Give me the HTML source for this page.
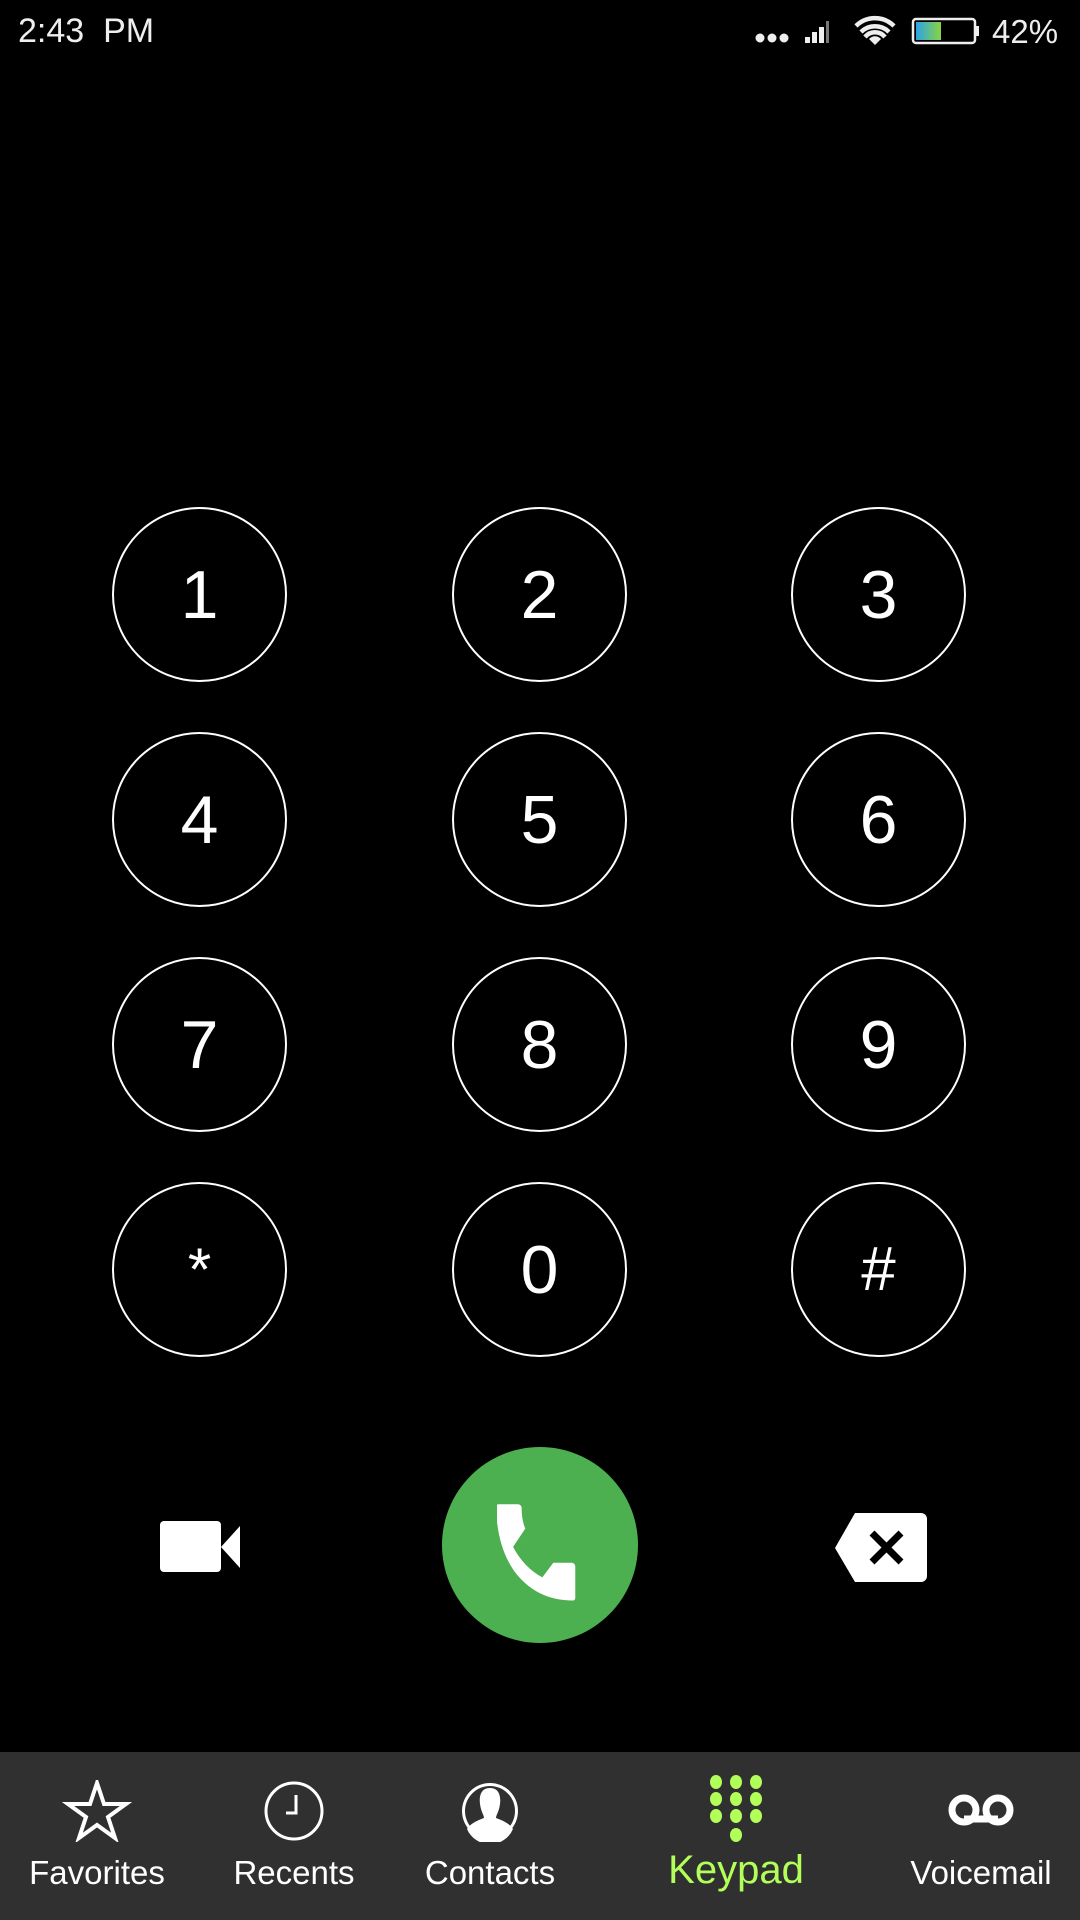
<!DOCTYPE html>
<html><head><meta charset="utf-8"><style>
html,body{margin:0;padding:0;background:#000;width:1080px;height:1920px;overflow:hidden;font-family:"Liberation Sans",sans-serif;color:#fff}
.abs{position:absolute}
.key{position:absolute;width:171px;height:171px;margin:-88px 0 0 -88px;border:2.5px solid #fff;border-radius:50%;display:flex;align-items:center;justify-content:center;font-size:68px;line-height:1}
.nav{position:absolute;left:0;top:1752px;width:1080px;height:168px;background:#303030}
.lbl{position:absolute;top:1854px;width:200px;margin-left:-100px;text-align:center;font-size:33px}
.ic{position:absolute;top:1780px;width:70px;height:62px;margin-left:-35px}
</style></head><body>
<div class="abs" style="left:18px;top:12px;font-size:34px;color:#eee">2:43&nbsp; PM</div>
<svg class="abs" style="left:755px;top:12px" width="310" height="38" viewBox="0 0 310 38">
<circle cx="5" cy="26" r="4.5" fill="#eee"/><circle cx="17" cy="26" r="4.5" fill="#eee"/><circle cx="29" cy="26" r="4.5" fill="#eee"/>
<path d="M50 31h5v-6h-5zM57 31h5v-11h-5zM64 31h5v-16h-5z" fill="#eee"/><path d="M71 31h3v-22h-3z" fill="#777"/>
<path d="M120 33l-6-6a8 8 0 0 1 12 0z" fill="#eee"/>
<path d="M106 20a20 20 0 0 1 28 0M101 14a27 27 0 0 1 38 0M110 25a13 13 0 0 1 20 0" stroke="#eee" stroke-width="4.5" fill="none"/>
<defs><linearGradient id="g" x1="0" x2="1"><stop offset="0" stop-color="#2aa3e8"/><stop offset="1" stop-color="#8ad43f"/></linearGradient></defs>
<rect x="158" y="7" width="62" height="24" rx="3" fill="none" stroke="#eee" stroke-width="2.5"/>
<rect x="161" y="10" width="25" height="18" fill="url(#g)"/>
<rect x="221" y="14" width="3" height="10" fill="#eee"/>
<text x="237" y="31" font-size="33" fill="#eee" font-family="Liberation Sans">42%</text>
</svg>

<div class="key" style="left:200px;top:595px">1</div>
<div class="key" style="left:540px;top:595px">2</div>
<div class="key" style="left:879px;top:595px">3</div>
<div class="key" style="left:200px;top:820px">4</div>
<div class="key" style="left:540px;top:820px">5</div>
<div class="key" style="left:879px;top:820px">6</div>
<div class="key" style="left:200px;top:1045px">7</div>
<div class="key" style="left:540px;top:1045px">8</div>
<div class="key" style="left:879px;top:1045px">9</div>
<div class="key" style="left:200px;top:1270px;font-size:60px">*</div>
<div class="key" style="left:540px;top:1270px">0</div>
<div class="key" style="left:879px;top:1270px;font-size:62px">#</div>

<svg class="abs" style="left:160px;top:1521px" width="81" height="52" viewBox="0 0 81 52"><rect x="0" y="0" width="61" height="51" rx="4" fill="#fff"/><path d="M61 26L80 5v42z" fill="#fff"/></svg>
<div class="abs" style="left:442px;top:1447px;width:196px;height:196px;border-radius:50%;background:#4caf50"></div>
<svg class="abs" style="left:497px;top:1503px" width="98" height="100" viewBox="0 0 80 82"><path d="M4 1h13a3 3 0 0 1 3 3q0 10 3 17l-10 15q9 17 24 25l9-12h15a3 3 0 0 1 3 3v26a2 2 0 0 1-2 2q-30 0-48-24q-14-20-15-52q0-3 2-3z" fill="#fff"/></svg>
<svg class="abs" style="left:835px;top:1513px" width="92" height="69" viewBox="0 0 92 69"><path d="M20 0h66a6 6 0 0 1 6 6v57a6 6 0 0 1-6 6h-66l-20-34z" fill="#fff"/><path d="M37 20l29 29M66 20l-29 29" stroke="#000" stroke-width="7"/></svg>

<div class="nav"></div>
<svg class="ic" style="left:97px" viewBox="0 0 70 62"><path d="M35 3l7 21h22l-18 13 7 21-18-13-18 13 7-21-18-13h22z" fill="none" stroke="#fff" stroke-width="4"/></svg>
<svg class="ic" style="left:294px" viewBox="0 0 70 62"><circle cx="35" cy="31" r="28" fill="none" stroke="#fff" stroke-width="3"/><path d="M37 15v18h-10" fill="none" stroke="#fff" stroke-width="3"/></svg>
<svg class="ic" style="left:490px" viewBox="0 0 70 62"><circle cx="35" cy="31" r="28" fill="#fff"/><circle cx="35" cy="31" r="25" fill="#303030"/><path d="M35 8c9 0 11 8 10 16-1 8-4 11-4 14 8 3 14 6 17 11a25 25 0 0 1-46 0c3-5 9-8 17-11 0-3-3-6-4-14-1-8 1-16 10-16z" fill="#fff"/></svg>
<svg class="abs" style="left:706px;top:1774px" width="60" height="70" viewBox="0 0 60 70"><g fill="#b2ff59"><ellipse cx="10" cy="8" rx="6" ry="7"/><ellipse cx="30" cy="8" rx="6" ry="7"/><ellipse cx="50" cy="8" rx="6" ry="7"/><ellipse cx="10" cy="25" rx="6" ry="7"/><ellipse cx="30" cy="25" rx="6" ry="7"/><ellipse cx="50" cy="25" rx="6" ry="7"/><ellipse cx="10" cy="42" rx="6" ry="7"/><ellipse cx="30" cy="42" rx="6" ry="7"/><ellipse cx="50" cy="42" rx="6" ry="7"/><ellipse cx="30" cy="61" rx="6" ry="7"/></g></svg>
<svg class="ic" style="left:981px" viewBox="0 0 70 62"><circle cx="18" cy="30" r="12" fill="none" stroke="#fff" stroke-width="7"/><circle cx="52" cy="30" r="12" fill="none" stroke="#fff" stroke-width="7"/><path d="M18 39h34" stroke="#fff" stroke-width="7"/></svg>

<div class="lbl" style="left:97px">Favorites</div>
<div class="lbl" style="left:294px">Recents</div>
<div class="lbl" style="left:490px">Contacts</div>
<div class="lbl" style="left:736px;top:1848px;font-size:40px;color:#b2ff59">Keypad</div>
<div class="lbl" style="left:981px">Voicemail</div>
</body></html>
